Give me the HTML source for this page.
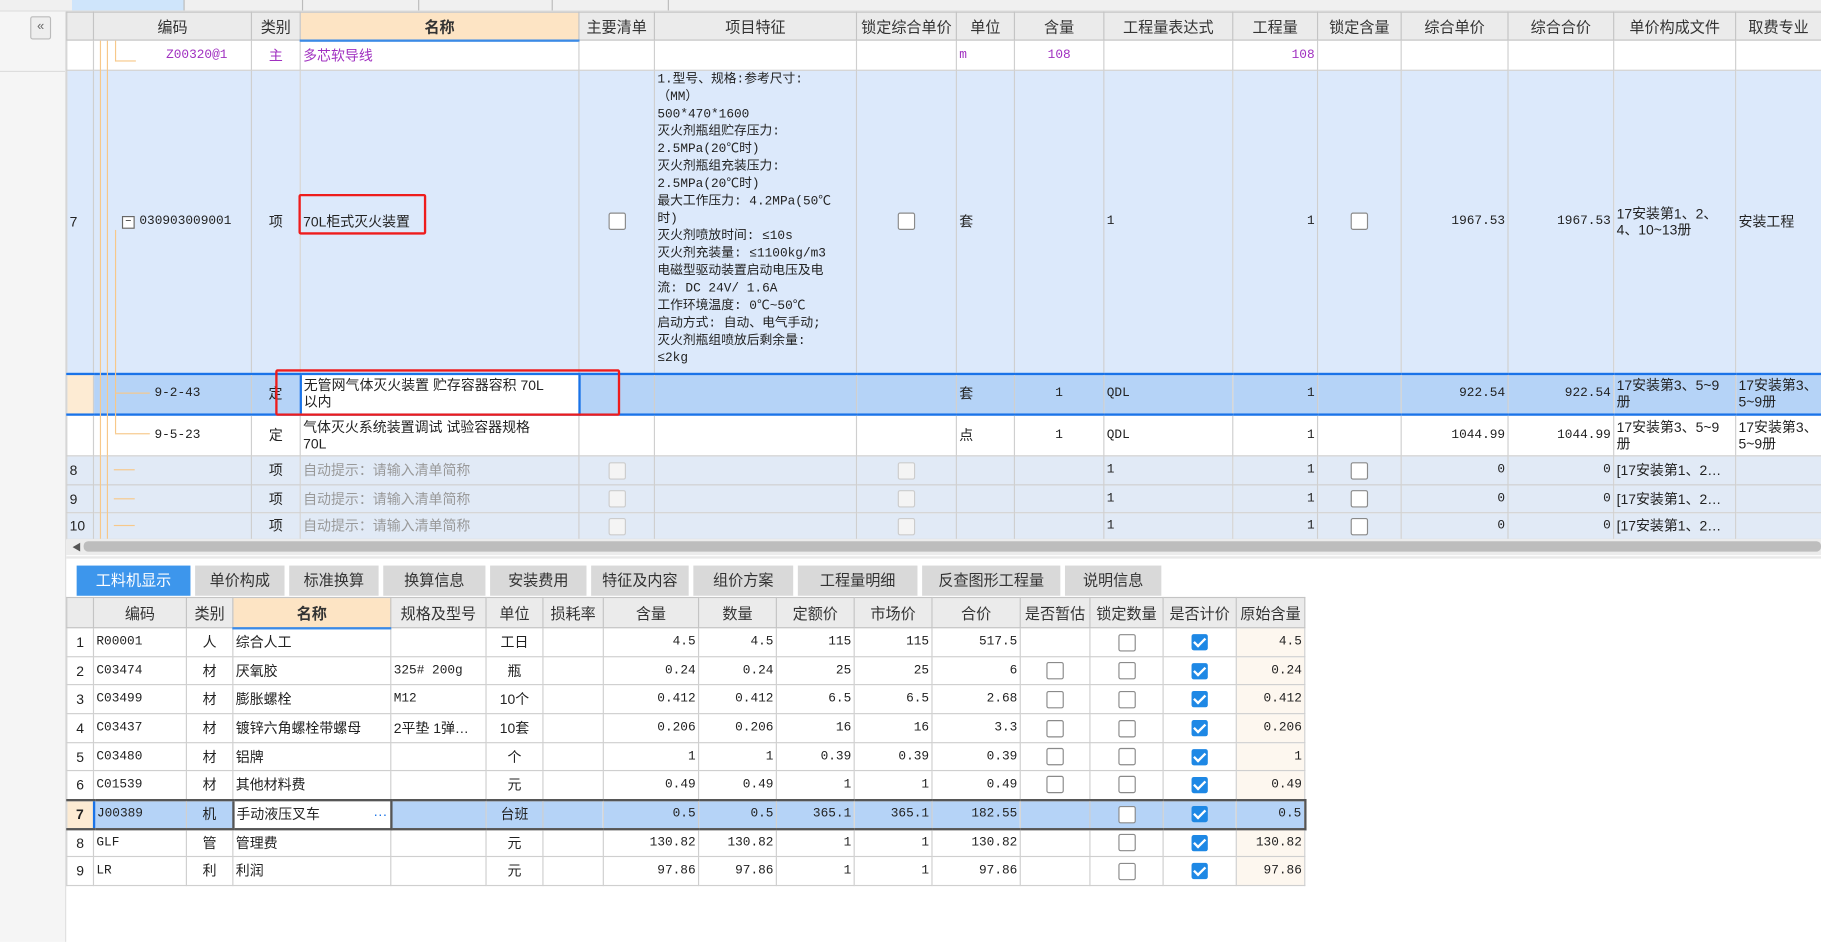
<!DOCTYPE html>
<html><head><meta charset="utf-8"><style>
html,body{margin:0;padding:0;width:1821px;height:942px;overflow:hidden;background:#fff}
#w{position:absolute;left:0;top:0;width:1568px;height:811px;transform:scale(1.16135,1.16135);transform-origin:0 0;font-family:"Liberation Sans","Noto Sans CJK SC",sans-serif;font-size:12px;color:#222}
.abs{position:absolute}
table{border-collapse:collapse;table-layout:fixed;position:absolute}
td{border:1px solid #cfcfcf;padding:0 2px;overflow:hidden;white-space:nowrap;font-size:12px;line-height:14px}
th{border:1px solid #c4c4c4;background:#ebebeb;font-weight:normal;font-size:13px;color:#333;padding:0}
th.nm{background:#fde4c4;font-weight:bold;border-bottom:2px solid #3b8ae6}
.r{text-align:right}.c{text-align:center}
.cb{display:inline-block;width:13px;height:13px;border:1px solid #8a8a8a;border-radius:2px;background:#fff;vertical-align:middle}
.cbg{border-color:#ccc;background:#f4f4f4}
.ck{display:inline-block;width:14px;height:14px;border-radius:2px;background:#1e88e5;vertical-align:middle;position:relative}
.ck:after{content:"";position:absolute;left:4px;top:1px;width:4px;height:8px;border:solid #fff;border-width:0 2px 2px 0;transform:rotate(45deg)}
.mono{font-family:"Liberation Mono","Noto Sans CJK SC",monospace;font-size:11px}
.b7 td{background:#dce9fb}
.bg td{background:#e1eaf6;color:#999}
.sel td{background:#b5d3f7;border-top:2px solid #1a73e8;border-bottom:2px solid #1a73e8}
.pur{color:#a030c0}
.tab{position:absolute;top:487px;height:26px;background:#d9d9d9;color:#333;font-size:13px;text-align:center;line-height:26px}
.feat{font-family:"Liberation Mono","Noto Sans CJK SC",monospace;font-size:11px;line-height:15px;vertical-align:top;padding-top:1px}
</style></head><body><div id="w">
<div class="abs" style="left:0;top:0;width:1568px;height:9px;background:#f0f0f0;border-bottom:1px solid #ddd"></div>
<div class="abs" style="left:62px;top:0;width:96px;height:9px;background:#cfe5fb"></div>
<div class="abs" style="left:158px;top:0;width:1px;height:9px;background:#bbb"></div>
<div class="abs" style="left:260px;top:0;width:1px;height:9px;background:#bbb"></div>
<div class="abs" style="left:360px;top:0;width:1px;height:9px;background:#bbb"></div>
<div class="abs" style="left:475px;top:0;width:1px;height:9px;background:#bbb"></div>
<div class="abs" style="left:575px;top:0;width:1px;height:9px;background:#bbb"></div>
<div class="abs" style="left:0;top:10px;width:56px;height:801px;background:#f5f5f5;border-right:1px solid #e0e0e0"></div>
<div class="abs" style="left:0;top:61px;width:56px;height:1px;background:#ddd"></div>
<div class="abs" style="left:26px;top:14px;width:16px;height:18px;border:1px solid #bbb;border-radius:2px;background:#eee;font-size:11px;line-height:17px;text-align:center;color:#666">&laquo;</div>

<table style="left:57px;top:10px;width:1511px">
<colgroup><col style="width:23px"><col style="width:136px"><col style="width:42px"><col style="width:240px"><col style="width:65px"><col style="width:174px"><col style="width:86px"><col style="width:50px"><col style="width:77px"><col style="width:111px"><col style="width:73px"><col style="width:72px"><col style="width:92px"><col style="width:91px"><col style="width:105px"><col style="width:74px"></colgroup>
<tr style="height:24px"><th></th><th>编码</th><th>类别</th><th class="nm">名称</th><th>主要清单</th><th>项目特征</th><th>锁定综合单价</th><th>单位</th><th>含量</th><th>工程量表达式</th><th>工程量</th><th>锁定含量</th><th>综合单价</th><th>综合合价</th><th>单价构成文件</th><th>取费专业</th></tr>
<tr style="height:26px" class="pur"><td></td><td style="padding-left:62px" class="mono pur">Z00320@1</td><td class="c pur">主</td><td class="pur">多芯软导线</td><td></td><td></td><td></td><td class="mono pur">m</td><td class="c mono pur">108</td><td></td><td class="r mono pur">108</td><td></td><td></td><td></td><td></td><td></td></tr>
<tr style="height:261px" class="b7"><td>7</td><td style="padding-left:24px" class="mono"><span style="display:inline-block;width:9px;height:9px;border:1px solid #666;background:#fff;font-size:9px;line-height:8px;text-align:center;margin-right:4px">−</span>030903009001</td><td class="c">项</td><td>70L柜式灭火装置</td><td class="c"><span class="cb"></span></td><td class="feat">1.型号、规格:参考尺寸:<br>（MM）<br>500*470*1600<br>灭火剂瓶组贮存压力:<br>2.5MPa(20℃时)<br>灭火剂瓶组充装压力:<br>2.5MPa(20℃时)<br>最大工作压力: 4.2MPa(50℃<br>时)<br>灭火剂喷放时间: ≤10s<br>灭火剂充装量: ≤1100kg/m3<br>电磁型驱动装置启动电压及电<br>流: DC 24V/ 1.6A<br>工作环境温度: 0℃~50℃<br>启动方式: 自动、电气手动;<br>灭火剂瓶组喷放后剩余量:<br>≤2kg</td><td class="c"><span class="cb"></span></td><td>套</td><td></td><td class="mono">1</td><td class="r mono">1</td><td class="c"><span class="cb"></span></td><td class="r mono">1967.53</td><td class="r mono">1967.53</td><td>17安装第1、2、<br>4、10~13册</td><td>安装工程</td></tr>
<tr style="height:35px" class="sel"><td style="background:#fdebd3;border-left:1px solid #cfcfcf"></td><td style="padding-left:52px" class="mono">9-2-43</td><td class="c">定</td><td style="background:#fff;border:2px solid #1a73e8">无管网气体灭火装置 贮存容器容积 70L<br>以内</td><td></td><td></td><td></td><td>套</td><td class="c mono">1</td><td class="mono">QDL</td><td class="r mono">1</td><td></td><td class="r mono">922.54</td><td class="r mono">922.54</td><td>17安装第3、5~9<br>册</td><td>17安装第3、<br>5~9册</td></tr>
<tr style="height:36px"><td></td><td style="padding-left:52px" class="mono">9-5-23</td><td class="c">定</td><td>气体灭火系统装置调试 试验容器规格<br>70L</td><td></td><td></td><td></td><td>点</td><td class="c mono">1</td><td class="mono">QDL</td><td class="r mono">1</td><td></td><td class="r mono">1044.99</td><td class="r mono">1044.99</td><td>17安装第3、5~9<br>册</td><td>17安装第3、<br>5~9册</td></tr>
<tr style="height:25px" class="bg"><td style="color:#222">8</td><td></td><td class="c" style="color:#222">项</td><td>自动提示：请输入清单简称</td><td class="c"><span class="cb cbg"></span></td><td></td><td class="c"><span class="cb cbg"></span></td><td></td><td></td><td class="mono" style="color:#222">1</td><td class="r mono" style="color:#222">1</td><td class="c"><span class="cb"></span></td><td class="r mono" style="color:#222">0</td><td class="r mono" style="color:#222">0</td><td style="color:#222">[17安装第1、2…</td><td></td></tr>
<tr style="height:24px" class="bg"><td style="color:#222">9</td><td></td><td class="c" style="color:#222">项</td><td>自动提示：请输入清单简称</td><td class="c"><span class="cb cbg"></span></td><td></td><td class="c"><span class="cb cbg"></span></td><td></td><td></td><td class="mono" style="color:#222">1</td><td class="r mono" style="color:#222">1</td><td class="c"><span class="cb"></span></td><td class="r mono" style="color:#222">0</td><td class="r mono" style="color:#222">0</td><td style="color:#222">[17安装第1、2…</td><td></td></tr>
<tr style="height:23px" class="bg"><td style="color:#222">10</td><td></td><td class="c" style="color:#222">项</td><td>自动提示：请输入清单简称</td><td class="c"><span class="cb cbg"></span></td><td></td><td class="c"><span class="cb cbg"></span></td><td></td><td></td><td class="mono" style="color:#222">1</td><td class="r mono" style="color:#222">1</td><td class="c"><span class="cb"></span></td><td class="r mono" style="color:#222">0</td><td class="r mono" style="color:#222">0</td><td style="color:#222">[17安装第1、2…</td><td></td></tr>
</table>
<!-- red boxes -->
<div class="abs" style="left:257px;top:167px;width:110px;height:35px;border:2px solid #ee1c1c;border-radius:2px;box-sizing:border-box"></div>
<div class="abs" style="left:237px;top:318px;width:297px;height:40px;border:2px solid #ee1c1c;border-radius:2px;box-sizing:border-box"></div>
<!-- tree lines -->
<div class="abs" style="left:86px;top:35px;width:1px;height:357px;background:#f7c88a"></div>
<div class="abs" style="left:92px;top:35px;width:1px;height:357px;background:#f7c88a"></div>
<div class="abs" style="left:99px;top:35px;width:1px;height:18px;background:#f7c88a"></div>
<div class="abs" style="left:99px;top:52px;width:18px;height:1px;background:#f7c88a"></div>
<div class="abs" style="left:99px;top:198px;width:1px;height:175px;background:#f7c88a"></div>
<div class="abs" style="left:99px;top:338px;width:30px;height:1px;background:#f7c88a"></div>
<div class="abs" style="left:99px;top:373px;width:30px;height:1px;background:#f7c88a"></div>
<div class="abs" style="left:86px;top:392px;width:1px;height:72px;background:#f7c88a"></div>
<div class="abs" style="left:92px;top:392px;width:1px;height:72px;background:#f7c88a"></div>
<div class="abs" style="left:98px;top:404px;width:18px;height:1px;background:#f7c88a"></div>
<div class="abs" style="left:98px;top:429px;width:18px;height:1px;background:#f7c88a"></div>
<div class="abs" style="left:98px;top:452px;width:18px;height:1px;background:#f7c88a"></div>
<div class="abs" style="left:57px;top:464px;width:1511px;height:14px;background:#ececec"></div>
<div class="abs" style="left:72px;top:466px;width:1496px;height:9px;background:#bdbdbd;border-radius:4px"></div>
<div class="abs" style="left:62px;top:466px;font-size:8px;color:#555">◀</div>
<div class="abs" style="left:57px;top:479px;width:1511px;height:2px;background:#e8e8e8"></div>
<div class="tab" style="left:66px;width:98px;background:#3d96ec;color:#fff">工料机显示</div>
<div class="tab" style="left:168px;width:77px">单价构成</div>
<div class="tab" style="left:249px;width:77px">标准换算</div>
<div class="tab" style="left:330px;width:88px">换算信息</div>
<div class="tab" style="left:422px;width:83px">安装费用</div>
<div class="tab" style="left:509px;width:84px">特征及内容</div>
<div class="tab" style="left:597px;width:86px">组价方案</div>
<div class="tab" style="left:687px;width:103px">工程量明细</div>
<div class="tab" style="left:794px;width:119px">反查图形工程量</div>
<div class="tab" style="left:917px;width:83px">说明信息</div>

<table style="left:57px;top:514px;width:1066px">
<colgroup><col style="width:23px"><col style="width:80px"><col style="width:40px"><col style="width:136px"><col style="width:82px"><col style="width:49px"><col style="width:52px"><col style="width:82px"><col style="width:67px"><col style="width:67px"><col style="width:67px"><col style="width:76px"><col style="width:60px"><col style="width:63px"><col style="width:63px"><col style="width:59px"></colgroup>
<tr style="height:26px"><th></th><th>编码</th><th>类别</th><th class="nm">名称</th><th>规格及型号</th><th>单位</th><th>损耗率</th><th>含量</th><th>数量</th><th>定额价</th><th>市场价</th><th>合价</th><th>是否暂估</th><th>锁定数量</th><th>是否计价</th><th>原始含量</th></tr>
<tr style="height:25px"><td class="c">1</td><td class="mono">R00001</td><td class="c">人</td><td>综合人工</td><td></td><td class="c">工日</td><td></td><td class="r mono">4.5</td><td class="r mono">4.5</td><td class="r mono">115</td><td class="r mono">115</td><td class="r mono">517.5</td><td></td><td class="c"><span class="cb"></span></td><td class="c"><span class="ck"></span></td><td class="r mono" style="background:#fdf7ef">4.5</td></tr>
<tr style="height:24px"><td class="c">2</td><td class="mono">C03474</td><td class="c">材</td><td>厌氧胶</td><td class="mono">325# 200g</td><td class="c">瓶</td><td></td><td class="r mono">0.24</td><td class="r mono">0.24</td><td class="r mono">25</td><td class="r mono">25</td><td class="r mono">6</td><td class="c"><span class="cb"></span></td><td class="c"><span class="cb"></span></td><td class="c"><span class="ck"></span></td><td class="r mono" style="background:#fdf7ef">0.24</td></tr>
<tr style="height:25px"><td class="c">3</td><td class="mono">C03499</td><td class="c">材</td><td>膨胀螺栓</td><td class="mono">M12</td><td class="c">10个</td><td></td><td class="r mono">0.412</td><td class="r mono">0.412</td><td class="r mono">6.5</td><td class="r mono">6.5</td><td class="r mono">2.68</td><td class="c"><span class="cb"></span></td><td class="c"><span class="cb"></span></td><td class="c"><span class="ck"></span></td><td class="r mono" style="background:#fdf7ef">0.412</td></tr>
<tr style="height:25px"><td class="c">4</td><td class="mono">C03437</td><td class="c">材</td><td>镀锌六角螺栓带螺母</td><td>2平垫 1弹…</td><td class="c">10套</td><td></td><td class="r mono">0.206</td><td class="r mono">0.206</td><td class="r mono">16</td><td class="r mono">16</td><td class="r mono">3.3</td><td class="c"><span class="cb"></span></td><td class="c"><span class="cb"></span></td><td class="c"><span class="ck"></span></td><td class="r mono" style="background:#fdf7ef">0.206</td></tr>
<tr style="height:24px"><td class="c">5</td><td class="mono">C03480</td><td class="c">材</td><td>铝牌</td><td></td><td class="c">个</td><td></td><td class="r mono">1</td><td class="r mono">1</td><td class="r mono">0.39</td><td class="r mono">0.39</td><td class="r mono">0.39</td><td class="c"><span class="cb"></span></td><td class="c"><span class="cb"></span></td><td class="c"><span class="ck"></span></td><td class="r mono" style="background:#fdf7ef">1</td></tr>
<tr style="height:25px"><td class="c">6</td><td class="mono">C01539</td><td class="c">材</td><td>其他材料费</td><td></td><td class="c">元</td><td></td><td class="r mono">0.49</td><td class="r mono">0.49</td><td class="r mono">1</td><td class="r mono">1</td><td class="r mono">0.49</td><td class="c"><span class="cb"></span></td><td class="c"><span class="cb"></span></td><td class="c"><span class="ck"></span></td><td class="r mono" style="background:#fdf7ef">0.49</td></tr>
<tr style="height:25px" class="sel"><td class="c" style="background:#fdebd3;font-weight:bold;border-top:2px solid #555;border-bottom:2px solid #555">7</td><td class="mono" style="border-top:2px solid #555;border-bottom:2px solid #555;border-left:2px solid #1a73e8">J00389</td><td class="c" style="border-top:2px solid #555;border-bottom:2px solid #555">机</td><td style="background:#fff;border:2px solid #555">手动液压叉车<span style="float:right;color:#1a73e8">···</span></td><td style="border-top:2px solid #555;border-bottom:2px solid #555"></td><td class="c" style="border-top:2px solid #555;border-bottom:2px solid #555">台班</td><td style="border-top:2px solid #555;border-bottom:2px solid #555"></td><td class="r mono" style="border-top:2px solid #555;border-bottom:2px solid #555">0.5</td><td class="r mono" style="border-top:2px solid #555;border-bottom:2px solid #555">0.5</td><td class="r mono" style="border-top:2px solid #555;border-bottom:2px solid #555">365.1</td><td class="r mono" style="border-top:2px solid #555;border-bottom:2px solid #555">365.1</td><td class="r mono" style="border-top:2px solid #555;border-bottom:2px solid #555">182.55</td><td style="border-top:2px solid #555;border-bottom:2px solid #555"></td><td class="c" style="border-top:2px solid #555;border-bottom:2px solid #555"><span class="cb"></span></td><td class="c" style="border-top:2px solid #555;border-bottom:2px solid #555"><span class="ck"></span></td><td class="r mono" style="border-top:2px solid #555;border-bottom:2px solid #555;border-right:2px solid #555">0.5</td></tr>
<tr style="height:24px"><td class="c">8</td><td class="mono">GLF</td><td class="c">管</td><td>管理费</td><td></td><td class="c">元</td><td></td><td class="r mono">130.82</td><td class="r mono">130.82</td><td class="r mono">1</td><td class="r mono">1</td><td class="r mono">130.82</td><td></td><td class="c"><span class="cb"></span></td><td class="c"><span class="ck"></span></td><td class="r mono" style="background:#fdf7ef">130.82</td></tr>
<tr style="height:25px"><td class="c">9</td><td class="mono">LR</td><td class="c">利</td><td>利润</td><td></td><td class="c">元</td><td></td><td class="r mono">97.86</td><td class="r mono">97.86</td><td class="r mono">1</td><td class="r mono">1</td><td class="r mono">97.86</td><td></td><td class="c"><span class="cb"></span></td><td class="c"><span class="ck"></span></td><td class="r mono" style="background:#fdf7ef">97.86</td></tr>
</table>
</div></body></html>
